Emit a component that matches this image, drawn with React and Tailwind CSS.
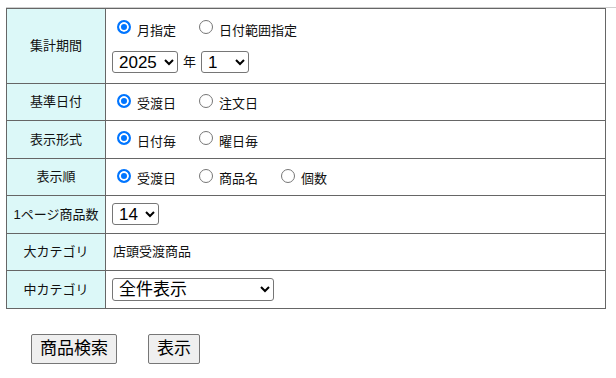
import React from "react";

const font = "font-['Liberation_Sans','Noto_Sans_CJK_JP',sans-serif]";

function Radio({ name, label, checked }) {
  return (
    <label className="inline-flex items-center mr-[18px]">
      <input
        type="radio"
        name={name}
        defaultChecked={checked}
        className="appearance-none w-[14px] h-[14px] rounded-full border border-[#767676] bg-white mt-[-3px] ml-[5px] mr-[6px] checked:border-[2px] checked:border-[#0075ff] checked:bg-[#0075ff] checked:shadow-[inset_0_0_0_2px_white]"
      />
      <span className="text-[13px] leading-[16px] mt-[4px]">{label}</span>
    </label>
  );
}

function Select({ options, className }) {
  return (
    <select className={"h-[22px] border border-[#767676] rounded-[3px] bg-white text-[17px] leading-[20px] pl-[2px] text-black " + className}>
      {options.map((o) => (
        <option key={o}>{o}</option>
      ))}
    </select>
  );
}

function Row({ label, children, h }) {
  return (
    <tr className={h}>
      <td className="w-[99px] border border-[#666] bg-[#dcf8f8] text-center text-[13px] text-[#111]">{label}</td>
      <td className="border border-[#666] pl-[6px] text-[13px] text-[#111]">{children}</td>
    </tr>
  );
}

export default function App() {
  return (
    <div className={"pt-[7px] pl-[6px] bg-white min-h-[378px] text-black " + font}>
      <div className="border-t border-[#cfcfcf]" />
      <table className="w-[600px] border-collapse">
        <tbody>
          <Row label="集計期間" h="h-[75px]">
            <div className="flex items-center h-[26px] mt-[2px]">
              <Radio name="period" label="月指定" checked />
              <Radio name="period" label="日付範囲指定" />
            </div>
            <div className="flex items-center mt-[9px] mb-[6px]">
              <Select options={["2025"]} className="w-[66px]" />
              <span className="mx-[5px] text-[13px]">年</span>
              <Select options={["1"]} className="w-[48px]" />
            </div>
          </Row>
          <Row label="基準日付" h="h-[37px]">
            <div className="flex items-center">
              <Radio name="base" label="受渡日" checked />
              <Radio name="base" label="注文日" />
            </div>
          </Row>
          <Row label="表示形式" h="h-[38px]">
            <div className="flex items-center">
              <Radio name="fmt" label="日付毎" checked />
              <Radio name="fmt" label="曜日毎" />
            </div>
          </Row>
          <Row label="表示順" h="h-[37px]">
            <div className="flex items-center">
              <Radio name="order" label="受渡日" checked />
              <Radio name="order" label="商品名" />
              <Radio name="order" label="個数" />
            </div>
          </Row>
          <Row label="1ページ商品数" h="h-[38px]">
            <Select options={["14"]} className="w-[47px]" />
          </Row>
          <Row label="大カテゴリ" h="h-[37px]">
            <span className="pl-[1px]">店頭受渡商品</span>
          </Row>
          <Row label="中カテゴリ" h="h-[38px]">
            <Select options={["全件表示"]} className="w-[162px] h-[23px]" />
          </Row>
        </tbody>
      </table>
      <div className="flex gap-[31px] ml-[25px] mt-[25px]">
        <button className="h-[30px] px-[8px] border border-[#767676] rounded-[2px] bg-[#efefef] text-[17px] text-black">商品検索</button>
        <button className="h-[30px] px-[8px] border border-[#767676] rounded-[2px] bg-[#efefef] text-[17px] text-black">表示</button>
      </div>
    </div>
  );
}
